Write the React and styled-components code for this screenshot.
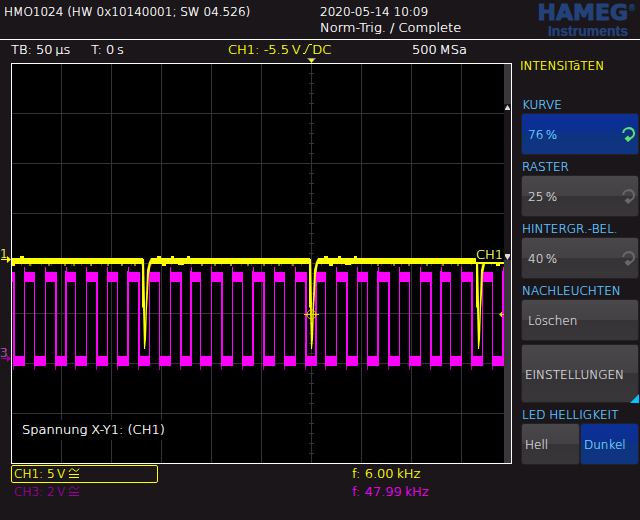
import React, { useState } from 'react';
import styled, { createGlobalStyle } from 'styled-components';

const GlobalStyle = createGlobalStyle`
  * {
    box-sizing: border-box;
  }

  body {
    margin: 0;
    background: #1a161a;
    color: #fff;
    font-family: 'DejaVu Sans Light', 'DejaVu Sans', sans-serif;
    font-weight: 200;
    font-size: 12px;
    line-height: 16px;
    text-shadow: 0 0 currentColor;
  }
`;

const Screen = styled.div`
  min-height: 100vh;
`;

const Header = styled.header`
  display: grid;
  grid-template-columns: 1fr 1fr;
  height: 40px;
  border-bottom: 1px solid #fff;
`;

const Device = styled.div`
  padding: 4px;
`;

const HeaderRight = styled.div`
  display: flex;
  justify-content: space-between;
  padding: 4px 4px 0 0;
  white-space: nowrap;
`;

const TriggerState = styled.div`
  font-size: 13px;
`;

const Logo = styled.div`
  display: flex;
  flex-direction: column;
  align-items: flex-end;
  color: #24427a;
  font-weight: bold;
`;

const Brand = styled.div`
  display: flex;
  font-family: 'DejaVu Sans', sans-serif;
  font-size: 22px;
  line-height: 18px;
  -webkit-text-stroke: 1px #24427a;
`;

const Registered = styled.span`
  font-size: 8px;
  font-weight: normal;
  line-height: 10px;
  -webkit-text-stroke: 0;
`;

const BrandSub = styled.div`
  padding-right: 8px;
  font-family: 'Liberation Sans', sans-serif;
  font-size: 14px;
  line-height: 18px;
`;

const Body = styled.div`
  display: grid;
  grid-template-columns: minmax(0, 1fr) 128px;
`;

const Main = styled.main`
  padding-left: 11px;
`;

const Status = styled.div`
  display: grid;
  grid-template-columns: 80px 137px 184px 1fr;
  height: 23px;
  font-size: 13px;
  line-height: 20px;
  white-space: nowrap;
`;

const Trigger = styled.span`
  color: #ff0;
`;

const Plot = styled.svg`
  display: block;
  width: 100%;
  height: auto;
  overflow: visible;
  font-size: 13px;
`;

const Channels = styled.div`
  display: grid;
  grid-template-columns: 341px 1fr;
  padding-top: 1px;
  font-size: 13px;
  line-height: 18px;
`;

const Channel = styled.div`
  width: 147px;
  height: 18px;
  padding-left: 2px;
  border: 1px solid ${(p) => (p.$active ? '#ff0' : 'transparent')};
  border-radius: 2px;
  color: ${(p) => p.$color};
  font-size: 12px;
  line-height: 17px;
`;

const Measure = styled.div`
  color: ${(p) => p.$color};
`;

const Side = styled.aside`
  padding: 17px 1px 0 9px;
`;

const Title = styled.h1`
  margin: 0 0 18px -1px;
  color: #ff0;
  font-size: 12px;
  font-weight: inherit;
  line-height: 18px;
`;

const Label = styled.div`
  height: 20px;
  padding-left: 1px;
  color: #5fc4ff;
  line-height: 24px;
  white-space: nowrap;
`;

const SoftKey = styled.button`
  position: relative;
  display: flex;
  flex: 1;
  align-items: center;
  justify-content: space-between;
  width: 100%;
  height: ${(p) => (p.$tall ? '59px' : '42px')};
  margin: ${(p) => (p.$tall ? '3px 0 0' : '0')};
  padding: ${(p) => (p.$inset ? '2px 2px 0 6px' : '2px 2px 0 3px')};
  border: 1px solid #242126;
  border-radius: 3px;
  background: ${(p) =>
    p.$active
      ? 'linear-gradient(#0c3098, #0b308e 50%, #0f347e 50%, #0f3482)'
      : 'linear-gradient(#4a474a, #444144 50%, #363337 50%, #39363a)'};
  color: ${(p) => (p.$active ? '#6fd0ff' : '#d2d0d2')};
  font: inherit;
  text-shadow: inherit;
  cursor: pointer;
`;

const Pair = styled.div`
  display: flex;
`;

const Corner = styled.span`
  position: absolute;
  right: -1px;
  bottom: -1px;
  border-bottom: 9px solid #00c4ff;
  border-left: 9px solid transparent;
`;

const Knob = ({ color }) => (
  <svg width='14' height='16' viewBox='0 0 14 16' aria-hidden='true'>
    <path
      d='M1.2 6 A5.4 5.2 0 1 1 8.5 11.2 L6 11.6'
      fill='none'
      stroke={color}
      strokeWidth='2'
    />
    <path d='M6 8.5 L2.5 11.5 L6 15 L9 12.5 Z' fill={color} />
  </svg>
);

// rising edge symbol
const Edge = () => (
  <svg width='9' height='10' viewBox='0 0 9 10' aria-hidden='true'>
    <path d='M0 9.5 H2 L6 0.5 H9' fill='none' stroke='#ff0' />
  </svg>
);

// AC/DC coupling symbol: a wave above two lines
const Coupling = () => (
  <svg
    width='12'
    height='10'
    viewBox='0 0 12 10'
    fill='none'
    stroke='currentColor'
    role='img'
    aria-label='DC'
  >
    <path d='M1 4 Q3.5 -1 6 2 T11 0.5 M1 6.5 H11 M1 9.5 H11' />
  </svg>
);

const DIPS = [132, 299, 466];
const PERIOD = 20.83;
const NOISE = [
  18, 37, 53, 62, 79, 96, 110, 123, 190, 203, 219, 236, 252, 267, 281, 366, 382,
  397, 415, 431, 446,
];
const steps = (n) => Array.from({ length: n }, (_, i) => i);

const Grid = () => (
  <g stroke='#333'>
    {steps(9).map((i) => (
      <path key={i} d={`M${50.5 + i * 50} 1 V400`} />
    ))}
    {steps(7).map((i) => (
      <path key={i} d={`M1 ${50.5 + i * 50} H493`} />
    ))}
    {steps(39).map((i) => (
      <path key={i} d={`M298 ${10.5 + i * 10} h5`} />
    ))}
    {steps(48).map((i) => (
      <path key={i} d={`M${10.5 + i * 10} 198 v5`} />
    ))}
  </g>
);

const SquareWave = () => (
  <g fill='#f0f'>
    <rect x='1' y='209' width='2' height='10' />
    {steps(24).map((i) => {
      const fall = Math.round(2 + i * PERIOD);
      const rise = Math.round(13 + i * PERIOD);
      const next = Math.min(Math.round(2 + (i + 1) * PERIOD), 493);
      return (
        <g key={i}>
          <rect x={fall} y='209' width={i % 2 ? 1 : 2} height='94' />
          <rect x={fall} y='303' width='1' height='4' opacity='0.7' />
          <rect
            x={fall}
            y='293'
            width={Math.min(rise, 493) - fall}
            height='10'
          />
          {rise < 493 && (
            <>
              <rect x={rise} y='204' width='1' height='99' />
              {i % 3 === 2 && (
                <rect x={rise - 1} y='208' width='1' height='95' />
              )}
              <rect x={rise} y='209' width={next - rise} height='10' />
            </>
          )}
        </g>
      );
    })}
  </g>
);

const Pulse = ({ x }) => (
  <g transform={`translate(${x} 0)`}>
    <path d='M-1 196 H1 L2 240 L2 262 L3 235 L4 207 L6 199 L8 195 H16 V199 L8 201 L6 211 L5 230 L4 246 L3 276 L2 286 H1 L0 245 L-1 244 Z' />
    <rect x='14' y='193' width='4' height='3' />
    <rect x='19' y='200' width='4' height='3' />
    {x < 400 && (
      <>
        <rect x='28' y='193' width='3' height='3' />
        <rect x='35' y='200' width='6' height='2' />
        <rect x='44' y='193' width='3' height='3' />
      </>
    )}
  </g>
);

const PulseTrain = () => (
  <g fill='#ff0'>
    <rect x='1' y='195' width='131' height='6' />
    <rect x='140' y='195' width='159' height='6' />
    <rect x='307' y='195' width='159' height='6' />
    <rect x='1' y='200' width='3' height='3' />
    <rect x='9' y='193' width='4' height='3' />
    {NOISE.map((x) => (
      <rect key={x} x={x} y='201' width='2' height='2' opacity='0.5' />
    ))}
    {DIPS.map((x) => (
      <Pulse key={x} x={x} />
    ))}
  </g>
);

const Oscillogram = () => (
  <Plot viewBox='0 0 501 401' role='img' aria-label='Oszillogramm'>
    <rect x='0' y='0' width='501' height='401' fill='#000' />
    <Grid />
    <SquareWave />
    <PulseTrain />

    {/* trigger point */}
    <g fill='none' stroke='#e6dc00'>
      <circle cx='300.5' cy='251.5' r='4.5' />
      <path d='M293 251.5 h15 M300.5 244 v15' />
    </g>

    {/* position bar */}
    <rect x='493' y='1' width='7' height='399' fill='#1a161a' />
    <rect x='493' y='1' width='7' height='40' fill='#3a373b' />
    <rect x='493' y='197' width='7' height='203' fill='#3a373b' />
    <path d='M496.5 42 L499 46 V47 H494 V46 Z' fill='#ddd' />
    <path d='M494 191 H499 V193 L496.5 197 L494 193 Z' fill='#ddd' />
    <path d='M493 251.5 h-3' stroke='#e6dc00' />
    <path d='M488 251.5 l3 -3 v6 z' fill='#e6dc00' />

    <rect x='465' y='184' width='26' height='15' fill='#000' />
    <rect x='465' y='199' width='28' height='2' fill='#ff0' />
    <text x='465' y='196' fill='#ff0'>
      CH1
    </text>
    <rect x='8' y='357' width='154' height='20' fill='#000' />
    <text x='11' y='371' fill='#fff'>
      Spannung X-Y1: (CH1)
    </text>

    <rect x='0.5' y='0.5' width='500' height='400' fill='none' stroke='#fff' />
    <path d='M296 -5 h9 l-4.5 5 z' fill='#999' />
    <path d='M298 -4 h5 l-2.5 4 z' fill='#ff0' />

    {/* channel zero markers */}
    <g fill='#ff0'>
      <text x='-11' y='195' fontSize='12'>
        1
      </text>
      <path d='M-10 196 h6 v-3 l4 3.5 l-4 3.5 v-3 h-6 z' />
    </g>
    <g fill='#a000a0'>
      <text x='-11' y='294' fontSize='12'>
        3
      </text>
      <path d='M-10 295 h6 v-3 l4 3.5 l-4 3.5 v-3 h-6 z' />
    </g>
  </Plot>
);

const SETTINGS = [
  { name: 'KURVE', value: '76\u2009%' },
  { name: 'RASTER', value: '25\u2009%' },
  { name: 'HINTERGR.-BEL.', value: '40\u2009%' },
];

const App = () => {
  const [selected, setSelected] = useState('KURVE');
  const [led, setLed] = useState('Dunkel');

  return (
    <Screen>
      <GlobalStyle />
      <Header>
        <Device>HMO1024 (HW 0x10140001; SW 04.526)</Device>
        <HeaderRight>
          <div>
            2020-05-14 10:09
            <TriggerState>Norm-Trig. / Complete</TriggerState>
          </div>
          <Logo>
            <Brand>
              HAMEG<Registered>®</Registered>
            </Brand>
            <BrandSub>Instruments</BrandSub>
          </Logo>
        </HeaderRight>
      </Header>

      <Body>
        <Main>
          <Status>
            <span>TB: 50{'\u2009'}µs</span>
            <span>T: 0{'\u2009'}s</span>
            <Trigger>
              CH1: -5.5{'\u2009'}V{'\u2009'}
              <Edge />
              DC
            </Trigger>
            <span>500{'\u2009'}MSa</span>
          </Status>
          <Oscillogram />
          <Channels>
            <Channel $active $color='#ff0'>
              CH1: 5{'\u2009'}V{'\u2009'}
              <Coupling />
            </Channel>
            <Measure $color='#ff0'>f: 6.00{'\u2009'}kHz</Measure>
            <Channel $color='#a000a0'>
              CH3: 2{'\u2009'}V{'\u2009'}
              <Coupling />
            </Channel>
            <Measure $color='#f0f'>f: 47.99{'\u2009'}kHz</Measure>
          </Channels>
        </Main>

        <Side>
          <Title>INTENSITäTEN</Title>
          {SETTINGS.map(({ name, value }) => (
            <React.Fragment key={name}>
              <Label id={name}>{name}</Label>
              <SoftKey
                $inset
                $active={selected === name}
                aria-describedby={name}
                onClick={() => setSelected(name)}
              >
                {value}
                <Knob color={selected === name ? '#5ee070' : '#6a676a'} />
              </SoftKey>
            </React.Fragment>
          ))}
          <Label id='NACHLEUCHTEN'>NACHLEUCHTEN</Label>
          <SoftKey $inset aria-describedby='NACHLEUCHTEN'>
            Löschen
          </SoftKey>
          <SoftKey $tall>
            EINSTELLUNGEN
            <Corner />
          </SoftKey>
          <Label id='LED'>LED HELLIGKEIT</Label>
          <Pair role='group' aria-labelledby='LED'>
            {['Hell', 'Dunkel'].map((mode) => (
              <SoftKey
                key={mode}
                $active={led === mode}
                aria-pressed={led === mode}
                onClick={() => setLed(mode)}
              >
                {mode}
              </SoftKey>
            ))}
          </Pair>
        </Side>
      </Body>
    </Screen>
  );
};

export default App;
